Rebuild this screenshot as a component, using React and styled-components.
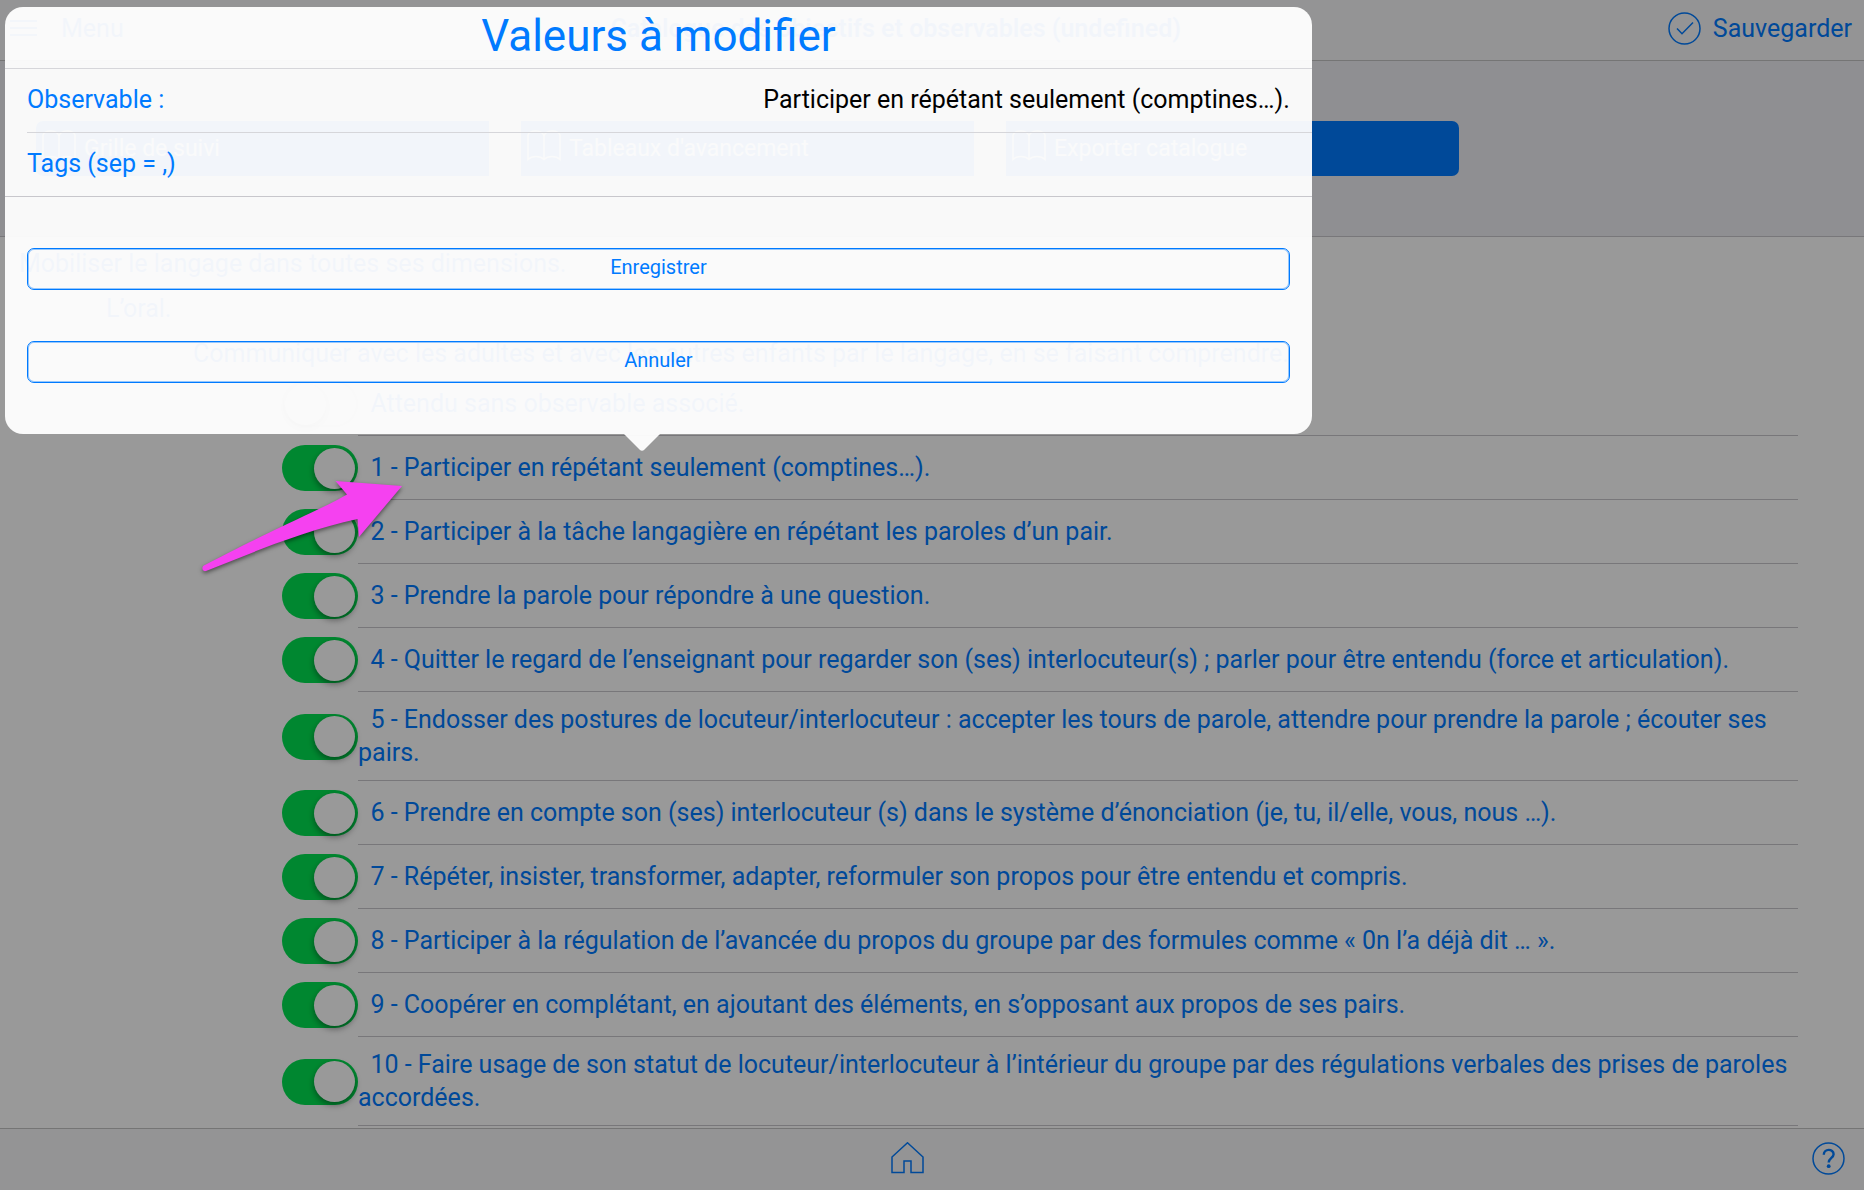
import React, { useState } from "react";
import styled, { createGlobalStyle } from "styled-components";

const BLUE = "#007aff";

const GlobalStyle = createGlobalStyle`
  *, *::before, *::after { box-sizing: border-box; }
  body {
    margin: 0;
    font-family: Roboto, "Noto Sans", sans-serif;
    font-size: 25px;
    line-height: 33px;
    color: #000;
    background: #fff;
  }
  button, input { font: inherit; }
`;

const View = styled.div`
  position: relative;
  display: flex;
  flex-direction: column;
  height: 100vh;
  overflow: hidden;
`;

const Navbar = styled.header`
  display: flex;
  flex: none;
  align-items: center;
  justify-content: space-between;
  height: 61px;
  padding: 0 12px 4px 10px;
  background: #f7f7f8;
  border-bottom: 1px solid #c4c4c4;
`;

const NavTitle = styled.h1`
  margin: 0;
  font-size: 25px;
  font-weight: 600;
  color: ${BLUE};
`;

const BarButton = styled.button`
  display: flex;
  align-items: center;
  gap: ${(p) => p.$gap || 0}px;
  padding: 0;
  border: 0;
  background: none;
  color: ${BLUE};
`;

const Actions = styled.nav`
  flex: none;
  padding: 60px 36px;
  background: #efeff4;
  border-bottom: 1px solid #c8c7cc;
`;

const Segmented = styled.div`
  display: grid;
  grid-template-columns: repeat(3, 1fr);
  gap: 32px;
  max-width: 1423px;
`;

const Segment = styled.button`
  display: flex;
  align-items: center;
  gap: 8px;
  height: 55px;
  padding: 0 6px;
  border: 0;
  background: ${BLUE};
  color: #fff;
  font-size: 23px;
  &:first-child { border-radius: 7px 0 0 7px; }
  &:last-child { border-radius: 0 7px 7px 0; }
`;

const Content = styled.main`
  flex: 1;
  min-height: 0;
  overflow: hidden;
  padding-top: 10px;
`;

const Headings = styled.div`
  display: flex;
  flex-direction: column;
  gap: 12px;
`;

const Heading = styled.h2`
  margin: 0;
  padding-left: ${(p) => 19 + p.$level * 87}px;
  font-size: 25px;
  font-weight: 400;
  color: ${BLUE};
`;

const Observables = styled.ul`
  list-style: none;
  margin: 2px 0 0;
  padding: 0 66px 0 282px;
`;

const Item = styled.li`
  display: flex;
  align-items: center;
`;

const ItemLabel = styled.label`
  display: flex;
  flex: 1;
  align-items: center;
  min-height: 64px;
  padding: 11px 8px 11px 0;
  border-bottom: 1px solid #c8c7cc;
  color: ${BLUE};
  white-space: pre-wrap;
`;

const Toggle = styled.input`
  appearance: none;
  flex: none;
  display: flex;
  align-items: center;
  width: 76px;
  height: 46px;
  margin: 0;
  padding: 0 3px;
  border-radius: 23px;
  background: #fff;
  box-shadow: inset 0 0 0 2px #e5e5e5;
  &::before {
    content: "";
    width: 41px;
    height: 41px;
    border-radius: 50%;
    background: #fff;
    box-shadow: 0 3px 6px rgba(0, 0, 0, 0.4);
  }
  &:checked {
    justify-content: flex-end;
    background: #00e250;
    box-shadow: none;
  }
`;

const Toolbar = styled.footer`
  display: flex;
  flex: none;
  align-items: center;
  justify-content: space-between;
  height: 62px;
  padding: 0 19px 2px 2px;
  background: #f7f7f8;
  border-top: 1px solid #c4c4c4;
`;

const Backdrop = styled.div`
  position: absolute;
  inset: 0;
  background: rgba(0, 0, 0, 0.4);
`;

const Popover = styled.section`
  position: absolute;
  top: 7px;
  left: 5px;
  width: calc(70% + 2px);
  border-radius: 18px;
  background: rgba(255, 255, 255, 0.95);
`;

const PopoverArrow = styled.svg`
  position: absolute;
  top: 100%;
  left: 618px;
  width: 38px;
  height: 17px;
  fill: rgba(255, 255, 255, 0.95);
`;

const PopoverTitle = styled.h2`
  margin: 0;
  padding-bottom: 3px;
  font-size: 44px;
  line-height: 58px;
  font-weight: 400;
  text-align: center;
  color: ${BLUE};
`;

const Fields = styled.div`
  padding-left: 22px;
  border-top: 1px solid #d6d6da;
  border-bottom: 1px solid #c8c7cc;
`;

const Field = styled.div`
  display: flex;
  align-items: center;
  height: 64px;
  padding: 0 22px 2px 0;
  border-bottom: 1px solid #d6d6da;
  &:last-child {
    height: 63px;
    border-bottom: 0;
  }
`;

const FieldLabel = styled.label`
  color: ${BLUE};
`;

const FieldInput = styled.input`
  flex: 1;
  min-width: 0;
  height: 33px;
  padding: 0;
  border: 0;
  outline: 0;
  background: none;
  color: #000;
  text-align: right;
`;

const PopoverActions = styled.div`
  display: grid;
  gap: 51px;
  padding: 51px 22px;
`;

const OutlineButton = styled.button`
  height: 42px;
  padding: 0 0 3px;
  border: 1px solid ${BLUE};
  border-radius: 7px;
  box-shadow: inset 0 0 0 1px rgba(0, 122, 255, 0.4);
  background: none;
  color: ${BLUE};
  font-size: 20px;
`;

const Pointer = styled.svg`
  position: absolute;
  left: 196px;
  top: 474px;
  width: 214px;
  height: 106px;
  overflow: visible;
  filter: drop-shadow(0 2px 2px rgba(0, 0, 0, 0.5));
  pointer-events: none;
`;

const LineIcon = styled.svg`
  flex: none;
  fill: none;
  stroke: ${(p) => p.$color || BLUE};
  stroke-width: ${(p) => p.$weight || 1.5};
`;

const MenuIcon = () => (
  <LineIcon width="27" height="18" viewBox="0 0 27 18" aria-hidden="true">
    <path d="M0 2h27M0 9h27M0 16h27" />
  </LineIcon>
);

const CheckIcon = () => (
  <LineIcon width="33" height="33" viewBox="0 0 33 33" aria-hidden="true">
    <circle cx="16.5" cy="16.5" r="15.5" />
    <path d="M9 16.5l5 5.2L25 10.5" />
  </LineIcon>
);

const BookIcon = () => (
  <LineIcon width="34" height="40" viewBox="0 0 34 40" $color="#fff" aria-hidden="true">
    <path d="M17 7C15 0.500 3 0.500 1 6V30.500C5 26.500 13 26.500 17 30.500C21 26.500 29 26.500 33 30.500V6C31 0.500 19 0.500 17 7V30.500" />
  </LineIcon>
);

const HomeIcon = () => (
  <LineIcon width="33" height="33" viewBox="0 0 33 33" aria-hidden="true">
    <path d="M1 15L16.500 0.800L32 15V30.500H20V19H13V30.500H1Z" />
  </LineIcon>
);

const HelpIcon = () => (
  <LineIcon width="33" height="33" viewBox="0 0 33 33" aria-hidden="true">
    <circle cx="16.500" cy="16.500" r="15.500" />
    <path d="M11.800 12.800C11.800 6.200 21.600 6.600 21.600 12.200C21.600 15.800 16.700 16 16.700 20.500" strokeWidth="2.400" />
    <circle cx="16.700" cy="24.200" r="1.900" fill={BLUE} stroke="none" />
  </LineIcon>
);

const HEADINGS = [
  "Mobiliser le langage dans toutes ses dimensions.",
  "L’oral.",
  "Communiquer avec les adultes et avec les autres enfants par le langage, en se faisant comprendre.",
];

const OBSERVABLES = [
  "Attendu sans observable associé.",
  "1 - Participer en répétant seulement (comptines…).",
  "2 - Participer à la tâche langagière en répétant les paroles d’un pair.",
  "3 - Prendre la parole pour répondre à une question.",
  "4 - Quitter le regard de l’enseignant pour regarder son (ses) interlocuteur(s) ; parler pour être entendu (force et articulation).",
  "5 - Endosser des postures de locuteur/interlocuteur : accepter les tours de parole, attendre pour prendre la parole ; écouter ses pairs.",
  "6 - Prendre en compte son (ses) interlocuteur (s) dans le système d’énonciation (je, tu, il/elle, vous, nous …).",
  "7 - Répéter, insister, transformer, adapter, reformuler son propos pour être entendu et compris.",
  "8 - Participer à la régulation de l’avancée du propos du groupe par des formules comme « 0n l’a déjà dit … ».",
  "9 - Coopérer en complétant, en ajoutant des éléments, en s’opposant aux propos de ses pairs.",
  "10 - Faire usage de son statut de locuteur/interlocuteur à l’intérieur du groupe par des régulations verbales des prises de paroles accordées.",
];

export default function App() {
  const [observable, setObservable] = useState("Participer en répétant seulement (comptines…).");
  const [tags, setTags] = useState("");

  return (
    <>
      <GlobalStyle />
      <View>
        <Navbar>
          <BarButton type="button" $gap={24}>
            <MenuIcon />
            Menu
          </BarButton>
          <NavTitle>Catalogue des objectifs et observables (undefined)</NavTitle>
          <BarButton type="button" $gap={12}>
            <CheckIcon />
            Sauvegarder
          </BarButton>
        </Navbar>

        <Actions>
          <Segmented>
            {["Grille de suivi", "Tableaux d'avancement", "Exporter catalogue"].map((label) => (
              <Segment type="button" key={label}>
                <BookIcon />
                {label}
              </Segment>
            ))}
          </Segmented>
        </Actions>

        <Content>
          <Headings>
            {HEADINGS.map((text, level) => (
              <Heading key={text} $level={level}>{text}</Heading>
            ))}
          </Headings>
          <Observables>
            {OBSERVABLES.map((text, i) => (
              <Item key={text}>
                <Toggle type="checkbox" id={`observable-${i}`} defaultChecked={i > 0} />
                <ItemLabel htmlFor={`observable-${i}`}>{"\u00a0\u00a0" + text}</ItemLabel>
              </Item>
            ))}
          </Observables>
        </Content>

        <Toolbar>
          <span />
          <BarButton type="button" aria-label="Accueil"><HomeIcon /></BarButton>
          <BarButton type="button" aria-label="Aide"><HelpIcon /></BarButton>
        </Toolbar>

        <Backdrop />

        <Popover role="dialog" aria-labelledby="popover-title">
          <PopoverTitle id="popover-title">Valeurs à modifier</PopoverTitle>
          <Fields>
            <Field>
              <FieldLabel htmlFor="field-observable">Observable :</FieldLabel>
              <FieldInput
                id="field-observable"
                value={observable}
                onChange={(e) => setObservable(e.target.value)}
              />
            </Field>
            <Field>
              <FieldLabel htmlFor="field-tags">Tags (sep = ,)</FieldLabel>
              <FieldInput id="field-tags" value={tags} onChange={(e) => setTags(e.target.value)} />
            </Field>
          </Fields>
          <PopoverActions>
            <OutlineButton type="button">Enregistrer</OutlineButton>
            <OutlineButton type="button">Annuler</OutlineButton>
          </PopoverActions>
          <PopoverArrow viewBox="0 0 38 17" aria-hidden="true">
            <path d="M1 0H37L21.500 15.500Q19 18 16.500 15.500Z" />
          </PopoverArrow>
        </Popover>

        <Pointer viewBox="0 0 214 106" aria-hidden="true">
          <path
            fill="#f541f0"
            d="M206 12L139.500 7L151 20.500C120 38 75 56 8 91.500C5 93.500 6.500 98 10 97C60 77 110 56 161.500 45L163 63Z"
          />
        </Pointer>
      </View>
    </>
  );
}
